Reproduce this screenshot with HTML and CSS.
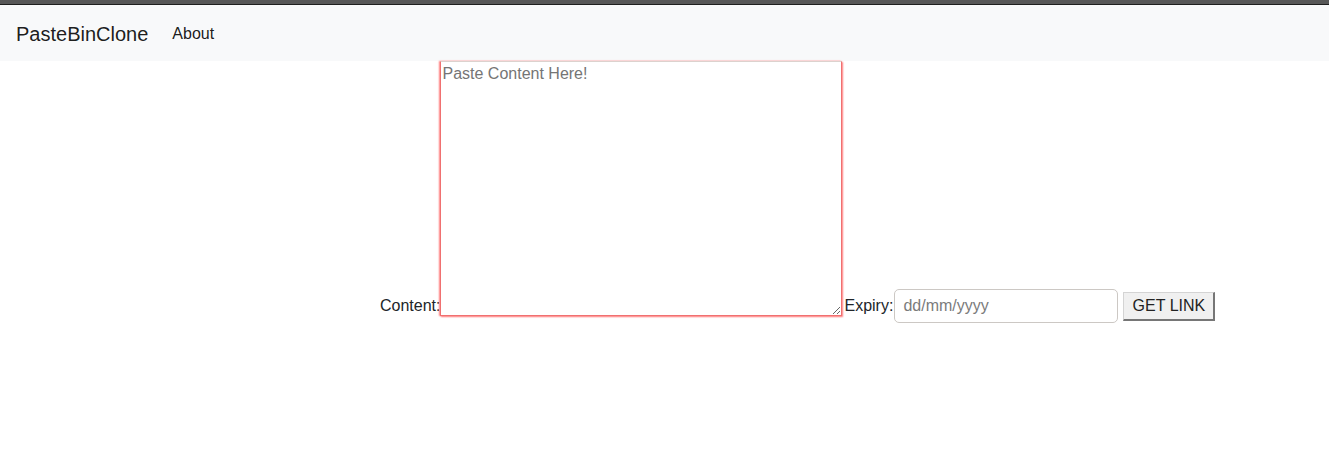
FILE: index.html
```html
<!DOCTYPE html>
<html>
<head>
<meta charset="utf-8">
<link rel="stylesheet" href="styles.css">
</head>
<body>
<div class="topbar"></div>
<nav class="navbar">
  <span class="brand">PasteBinClone</span>
  <a class="nav-link">About</a>
</nav>
<form class="paste-form">
  <label class="lbl">Content:</label>
  <textarea class="content" placeholder="Paste Content Here!"></textarea>
  <label class="lbl lbl-expiry">Expiry:</label>
  <input class="expiry" type="text" placeholder="dd/mm/yyyy">
  <button class="btn" type="button">GET LINK</button>
</form>
</body>
</html>
```
FILE: styles.css
```css
html, body {
  margin: 0;
  padding: 0;
  background: #fff;
  font-family: "Liberation Sans", Arial, sans-serif;
  color: #212529;
}
.topbar {
  height: 4px;
  background: #575757;
  border-bottom: 1px solid #1e1e1e;
}
.navbar {
  height: 56px;
  background: #f8f9fa;
  display: flex;
  align-items: center;
  padding: 0 16px;
  box-sizing: border-box;
}
.brand {
  font-size: 20px;
  color: rgba(0, 0, 0, 0.9);
  margin-right: 16px;
  line-height: 30px;
  padding-top: 2px;
}
.nav-link {
  font-size: 16px;
  color: rgba(0, 0, 0, 0.9);
  padding: 8px;
  padding-top: 10px;
}
.paste-form {
  display: flex;
  align-items: flex-end;
  padding-left: 380px;
  margin: 0;
}
.lbl {
  font-size: 16px;
  line-height: 19px;
  color: #212529;
  margin-bottom: 8px;
}
.content {
  width: 402px;
  height: 255px;
  box-sizing: border-box;
  margin: 0 0 7px 0;
  padding: 2px 2px 2px 1px;
  border: 1px solid #f07070;
  border-top-color: #dcd2ce;
  box-shadow: 1px 1px 1.5px 0 #ff8080, -1px 0 1.5px 0 #ff8080;
  font-family: "Liberation Sans", Arial, sans-serif;
  font-size: 16px;
  line-height: 19px;
  resize: both;
  outline: none;
}
.content::placeholder {
  color: #757575;
}
.lbl-expiry {
  margin-left: 2px;
}
.expiry {
  width: 224px;
  height: 34px;
  box-sizing: border-box;
  margin: 0 0 0 1px;
  padding: 0 8px;
  border: 1px solid #ccc8c4;
  border-radius: 5px;
  font-family: "Liberation Sans", Arial, sans-serif;
  font-size: 16px;
  outline: none;
}
.expiry::placeholder {
  color: #7b7b7b;
}
.btn {
  width: 92px;
  height: 29px;
  box-sizing: border-box;
  margin: 0 0 2px 5px;
  padding: 0;
  background: #f0f0f0;
  border-style: solid;
  border-width: 1px 2px 2px 1px;
  border-color: #d4d4d4 #767676 #767676 #d4d4d4;
  font-family: "Liberation Sans", Arial, sans-serif;
  font-size: 16px;
  color: #222;
}
```
